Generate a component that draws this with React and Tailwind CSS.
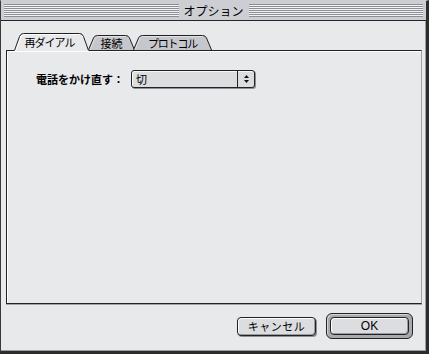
import React from "react";

const JP = { fontFamily: '"Noto Sans CJK JP", "Noto Sans", sans-serif' };

function Tab({ w, selected, label, className = "", textClass = "" }) {
  const fill = selected
    ? `M0,18 L5.5,4 Q6.5,1 9.5,1 L${w - 9.5},1 Q${w - 6.5},1 ${w - 5.5},4 L${w},18 Z`
    : `M0,17 L5.5,5.5 Q6.5,2.5 9.5,2.5 L${w - 9.5},2.5 Q${w - 6.5},2.5 ${w - 5.5},5.5 L${w},17 Z`;
  const stroke = selected
    ? `M0.5,17.5 L5.5,3.5 Q6.5,0.5 9.5,0.5 L${w - 9.5},0.5 Q${w - 6.5},0.5 ${w - 5.5},3.5 L${w - 0.5},17.5`
    : `M0.5,17 L5.5,5 Q6.5,2.5 9.5,2.5 L${w - 9.5},2.5 Q${w - 6.5},2.5 ${w - 5.5},5 L${w - 0.5},17`;
  return (
    <div className={`relative h-[18px] shrink-0 flex items-center justify-center ${selected ? "z-10 pt-[1px]" : "pt-[2px]"} ${className}`} style={{ width: w }}>
      <svg className="absolute inset-0" width={w} height={18} viewBox={`0 0 ${w} 18`}>
        <path d={fill} fill={selected ? "#e8e9eb" : "#c6c7cc"} />
        {selected ? (
          <path d={`M1.8,17.5 L6.6,4.5 Q7.5,1.5 9.5,1.5 L${w - 9.5},1.5`} fill="none" stroke="#ffffff" strokeWidth="1" />
        ) : (
          <path d={`M2,16.5 L6.6,5.8 Q7.4,3.5 9.5,3.5 L${w - 9.5},3.5`} fill="none" stroke="#e2e3e6" strokeWidth="1" />
        )}
        <path d={stroke} fill="none" stroke="#202020" strokeWidth="1" />
      </svg>
      <span className={`relative text-[11px] leading-none text-black ${textClass}`} style={JP}>{label}</span>
    </div>
  );
}

const stripes =
  "h-[13px] flex-1 bg-[repeating-linear-gradient(to_bottom,#8d8e94_0px,#8d8e94_1px,#f3f3f5_1px,#f3f3f5_2px)]";

export default function App() {
  return (
    <div className="w-[429px] h-[354px] flex flex-col bg-[#e8e9eb] border-l border-l-[#3a3a3a] border-t border-t-[#cdced3] border-r-[3px] border-r-[#2c2c2c] border-b-[3px] border-b-[#2c2c2c] shadow-[inset_-1px_-1px_0_#9c9da2]">
      {/* title bar */}
      <div className="h-[20px] shrink-0 flex items-center pl-[3px] pr-[3px] bg-[#cdced3] border-b border-[#262626]">
        <div className={stripes} />
        <span className="px-[5px] text-[12px] leading-none text-black" style={JP}>オプション</span>
        <div className={stripes} />
      </div>

      {/* body */}
      <div className="flex-1 flex flex-col pt-[12px] pl-[5px] pr-[4px]">
        {/* tabs */}
        <div className="relative z-10 flex h-[18px] -mb-px pl-[8px]">
          <Tab w={75} selected label="再ダイアル" textClass="tracking-[-1px] -ml-[4px]" />
          <Tab w={47} label="接続" className="-ml-[1px]" textClass="tracking-[0px]" />
          <Tab w={79} label="プロトコル" className="-ml-[2px]" textClass="tracking-[-1.2px]" />
        </div>

        {/* panel */}
        <div className="h-[254px] shrink-0 border-t border-l border-b border-[#222] border-r border-r-[#a2a3a8] shadow-[inset_1px_1px_0_#ffffff,0_1px_0_#a2a3a8] pt-[19px] pl-[29px]">
          <div className="flex items-center h-[18px]">
            <span className="w-[95px] shrink-0 text-[11px] font-bold leading-none text-black tracking-[0px]" style={JP}>
              電話をかけ直す：
            </span>
            <div className="flex h-[18px] w-[124px] rounded-[3px] border border-[#222] bg-[#dcdde1] shadow-[inset_1px_1px_0_#f8f8fa,1px_1px_0_#8e8f95]">
              <div className="flex-1 flex items-center pl-[4px]">
                <span className="text-[11px] leading-none text-black" style={JP}>切</span>
              </div>
              <div className="w-[17px] shrink-0 border-l border-[#222] flex flex-col items-center justify-center gap-[2px]">
                <svg width="5" height="3" viewBox="0 0 5 3"><path d="M2.5,0 L5,3 L0,3 Z" fill="#111" /></svg>
                <svg width="5" height="3" viewBox="0 0 5 3"><path d="M0,0 L5,0 L2.5,3 Z" fill="#111" /></svg>
              </div>
            </div>
          </div>
        </div>

        {/* buttons */}
        <div className="mt-[9px] h-[26px] flex items-center justify-end gap-[10px] pr-[9px]">
          <div className="w-[79px] h-[19px] rounded-[4px] border border-[#222] bg-[#dcdde1] shadow-[inset_1px_1px_0_#ffffff,inset_-1px_-1px_0_#9a9ba0,1px_1px_0_#8e8f95] flex items-center justify-center">
            <span className="text-[11px] leading-none text-black tracking-[0.5px]" style={JP}>キャンセル</span>
          </div>
          <div className="w-[87px] h-[26px] rounded-[6px] border border-[#222] bg-[#a9aaaf] shadow-[inset_1px_1px_0_#d4d5d9] p-[3px]">
            <div className="w-full h-full rounded-[4px] border border-[#222] bg-[#dcdde1] shadow-[inset_1px_1px_0_#ffffff,inset_-1px_-1px_0_#9a9ba0] flex items-center justify-center">
              <span className="text-[12px] leading-none text-black" style={{ fontFamily: '"Liberation Sans Narrow", "Liberation Sans", sans-serif' }}>OK</span>
            </div>
          </div>
        </div>
      </div>
    </div>
  );
}
